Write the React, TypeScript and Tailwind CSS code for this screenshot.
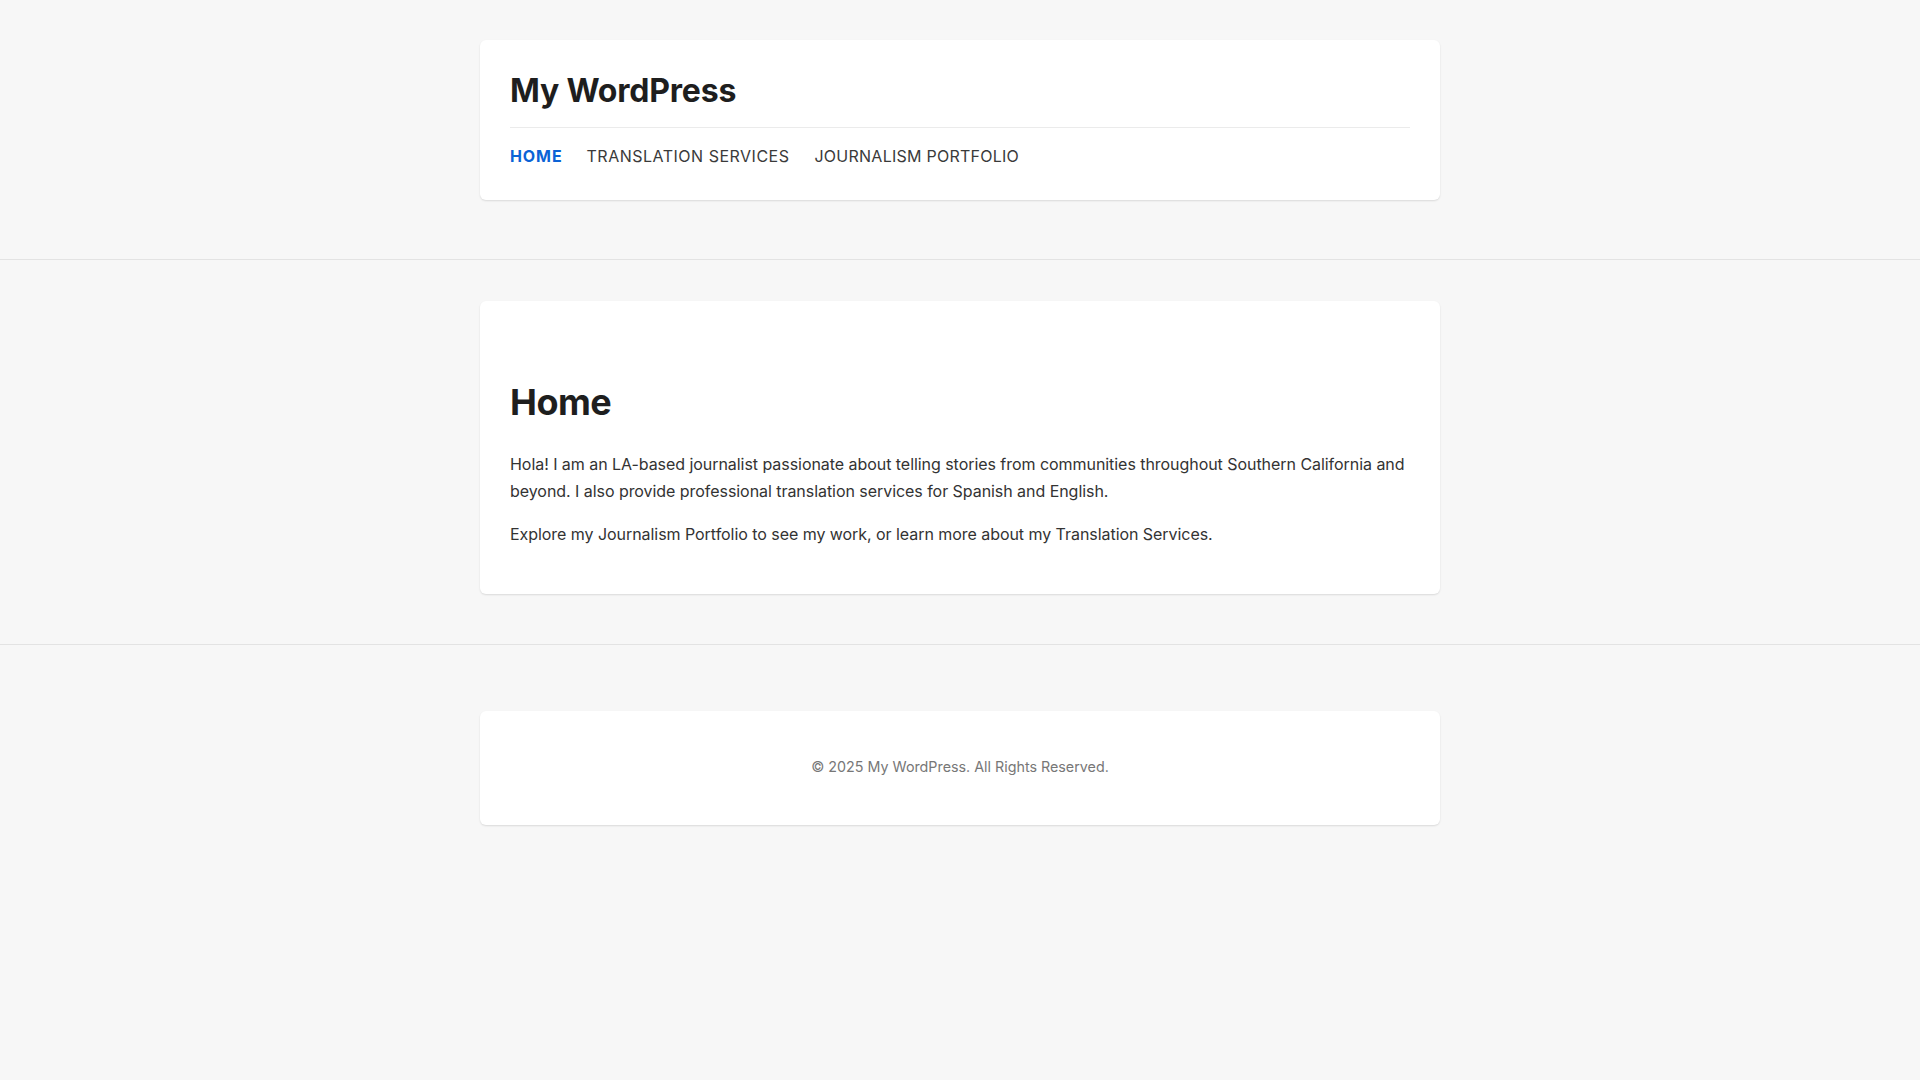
import React from "react";

export default function App() {
  return (
    <div className="min-h-screen bg-[#f7f7f7] font-['Inter',sans-serif] antialiased">
      <header className="border-b border-[#e3e3e3] pt-10 pb-[59px]">
        <div className="mx-auto w-[960px] rounded-md bg-white px-[30px] shadow-[0_1px_2px_rgba(0,0,0,0.12)]">
          <div className="border-b border-[#ebebeb] pt-[32px] pb-[17px]">
            <h1 className="text-[32px] font-bold leading-[1.2] tracking-[-0.2px] text-[#1e1e1e]">My WordPress</h1>
          </div>
          <nav className="flex gap-6 pt-4 pb-8 text-base uppercase leading-6 tracking-[0.5px]">
            <a className="font-bold tracking-[0.9px] text-[#0b63d6]">Home</a>
            <a className="text-[#3a3a3a]">Translation Services</a>
            <a className="ml-[1px] tracking-[0.25px] text-[#3a3a3a]">Journalism Portfolio</a>
          </nav>
        </div>
      </header>

      <main className="border-b border-[#e3e3e3] pt-[41px] pb-[50px]">
        <article className="mx-auto w-[960px] rounded-md bg-white px-[30px] pt-[80px] pb-[30px] shadow-[0_1px_2px_rgba(0,0,0,0.12)]">
          <h1 className="text-[36px] font-bold leading-[1.2] tracking-[-0.5px] text-[#1e1e1e]">Home</h1>
          <div className="mt-[26px] text-base leading-[1.7] tracking-[-0.05px] text-[#333]">
            <p className="mb-4">
              Hola! I am an LA-based journalist passionate about telling stories from communities throughout Southern
              California and beyond. I also provide professional translation services for Spanish and English.
            </p>
            <p className="mb-4">
              Explore my Journalism Portfolio to see my work, or learn more about my Translation Services.
            </p>
          </div>
        </article>
      </main>

      <footer className="pt-[66px]">
        <div className="mx-auto flex h-[114px] w-[960px] items-center justify-center rounded-md bg-white pb-[2px] shadow-[0_1px_2px_rgba(0,0,0,0.12)]">
          <p className="text-[14.3px] leading-6 text-[#777]">© 2025 My WordPress. All Rights Reserved.</p>
        </div>
      </footer>
    </div>
  );
}
